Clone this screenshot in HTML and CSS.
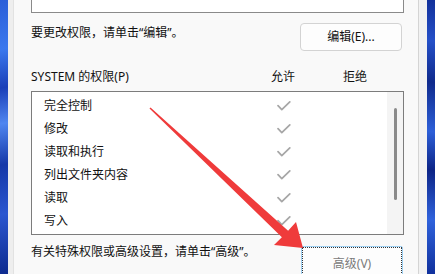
FILE: index.html
```html
<!DOCTYPE html>
<html lang="zh-CN">
<head>
<meta charset="utf-8">
<link rel="stylesheet" href="styles.css">
</head>
<body>
<div class="screen">
  <div class="wall wall-left"></div>
  <div class="frame frame-left"></div>
  <div class="dialog">
    <div class="topbox"></div>
    <div class="edit-row">
      <span class="msg">要更改权限，请单击“编辑”。</span>
      <div class="btn edit-btn">编辑(E)...</div>
    </div>
    <div class="perm-header">
      <span class="perm-title">SYSTEM 的权限(P)</span>
      <span class="col">允许</span>
      <span class="col">拒绝</span>
    </div>
    <div class="listbox">
      <div class="rows">
        <div class="row"><span class="label">完全控制</span><span class="chk"><svg viewBox="0 0 14 10" width="14" height="10"><path d="M1 4.6 L4.8 8.6 L12.8 0.9"/></svg></span><span></span></div>
        <div class="row"><span class="label">修改</span><span class="chk"><svg viewBox="0 0 14 10" width="14" height="10"><path d="M1 4.6 L4.8 8.6 L12.8 0.9"/></svg></span><span></span></div>
        <div class="row"><span class="label">读取和执行</span><span class="chk"><svg viewBox="0 0 14 10" width="14" height="10"><path d="M1 4.6 L4.8 8.6 L12.8 0.9"/></svg></span><span></span></div>
        <div class="row"><span class="label">列出文件夹内容</span><span class="chk"><svg viewBox="0 0 14 10" width="14" height="10"><path d="M1 4.6 L4.8 8.6 L12.8 0.9"/></svg></span><span></span></div>
        <div class="row"><span class="label">读取</span><span class="chk"><svg viewBox="0 0 14 10" width="14" height="10"><path d="M1 4.6 L4.8 8.6 L12.8 0.9"/></svg></span><span></span></div>
        <div class="row"><span class="label">写入</span><span class="chk"><svg viewBox="0 0 14 10" width="14" height="10"><path d="M1 4.6 L4.8 8.6 L12.8 0.9"/></svg></span><span></span></div>
      </div>
      <div class="scrollbar"><div class="thumb"></div></div>
    </div>
    <div class="adv-row">
      <span class="msg adv-msg">有关特殊权限或高级设置，请单击“高级”。</span>
      <div class="btn adv-btn">高级(V)</div>
    </div>
  </div>
  <div class="frame frame-right"></div>
  <div class="wall wall-right"></div>
  <svg class="arrow" viewBox="0 0 435 274" width="435" height="274">
    <polygon points="150.5,107.4 288.1,230.7 296,222 303,248 274,245 281.9,237.3 149.5,108.6"/>
  </svg>
</div>
</body>
</html>
```

FILE: styles.css
```css
* { box-sizing: border-box; }

html, body {
  margin: 0;
  padding: 0;
  width: 435px;
  height: 274px;
  overflow: hidden;
  background: #f9f9f9;
}

.screen {
  position: relative;
  display: flex;
  width: 435px;
  height: 274px;
  overflow: hidden;
  font-family: "Noto Sans", "Noto Sans CJK SC", sans-serif;
  font-size: 12px;
  color: #111111;
}

.wall {
  flex: none;
  height: 100%;
}

.wall-left {
  width: 8px;
  background: linear-gradient(170deg, #2a5ed8 0%, #3a78ee 18%, #1a3fb8 32%, #4f86f0 45%, #1538a8 60%, #2a56d0 78%, #0d2a8e 100%);
}

.wall-right {
  width: 8px;
  background: linear-gradient(190deg, #12309a 0%, #2550c8 15%, #0f2a8c 30%, #2d5fd8 48%, #0c2486 62%, #2f62dc 80%, #10309c 100%);
}

.frame {
  flex: none;
  height: 100%;
}

.frame-left {
  width: 6px;
  background: #eeeeee;
  border-right: 1px solid #e2e2e2;
}

.frame-right {
  width: 9px;
  background: #f2f2f2;
  border-left: 1px solid #d4d4d4;
}

.dialog {
  flex: 1;
  display: flex;
  flex-direction: column;
  overflow: hidden;
  padding: 0 14px 0 17px;
  background: #f9f9f9;
}

.dialog > * {
  flex-shrink: 0;
}

.topbox {
  height: 13px;
  background: #ffffff;
  border: 1px solid #8a8a8a;
  border-top: none;
}

.edit-row {
  display: flex;
  justify-content: space-between;
  align-items: flex-start;
  margin-top: 10px;
  padding-right: 2px;
}

.msg {
  line-height: 16px;
  padding-top: 2px;
  white-space: nowrap;
}

.btn {
  width: 102px;
  height: 28px;
  display: flex;
  align-items: center;
  justify-content: center;
  background: #fdfdfd;
  border: 1px solid #d3d3d3;
  border-radius: 4px;
  line-height: 16px;
  white-space: nowrap;
}

.perm-header {
  display: grid;
  grid-template-columns: 1fr 24px 24px;
  column-gap: 48px;
  padding-right: 37px;
  margin-top: 18px;
  line-height: 16px;
  height: 16px;
  white-space: nowrap;
}

.col {
  text-align: center;
}

.listbox {
  display: flex;
  margin-top: 6px;
  height: 144px;
  background: #ffffff;
  border: 1px solid #7c7c7c;
}

.rows {
  flex: 1;
  padding-top: 2px;
}

.row {
  display: grid;
  grid-template-columns: 1fr 24px 91px;
  height: 23px;
  align-items: center;
  line-height: 16px;
}

.label {
  padding-left: 12px;
  white-space: nowrap;
}

.chk {
  display: flex;
  justify-content: center;
  align-items: center;
}

.chk svg path {
  fill: none;
  stroke: #a6a6a6;
  stroke-width: 1.7;
  stroke-linecap: round;
  stroke-linejoin: round;
}

.scrollbar {
  width: 16px;
  background: #f4f4f4;
  display: flex;
  justify-content: center;
  padding-top: 16px;
}

.thumb {
  width: 3px;
  height: 92px;
  border-radius: 2px;
  background: #8a8a8a;
}

.adv-row {
  display: flex;
  justify-content: space-between;
  align-items: flex-start;
  padding-right: 1px;
}

.adv-msg {
  margin-top: 9px;
  padding-top: 0;
}

.adv-btn {
  margin-top: 11px;
  height: 32px;
  align-items: flex-start;
  padding-top: 9px;
  color: #7a7a7a;
  border: 1px solid #9ccff2;
  outline: 1px dotted #333333;
  outline-offset: -2px;
  border-radius: 2px;
}

.arrow {
  position: absolute;
  left: 0;
  top: 0;
  pointer-events: none;
}

.arrow polygon {
  fill: #ef3b3b;
}
```
